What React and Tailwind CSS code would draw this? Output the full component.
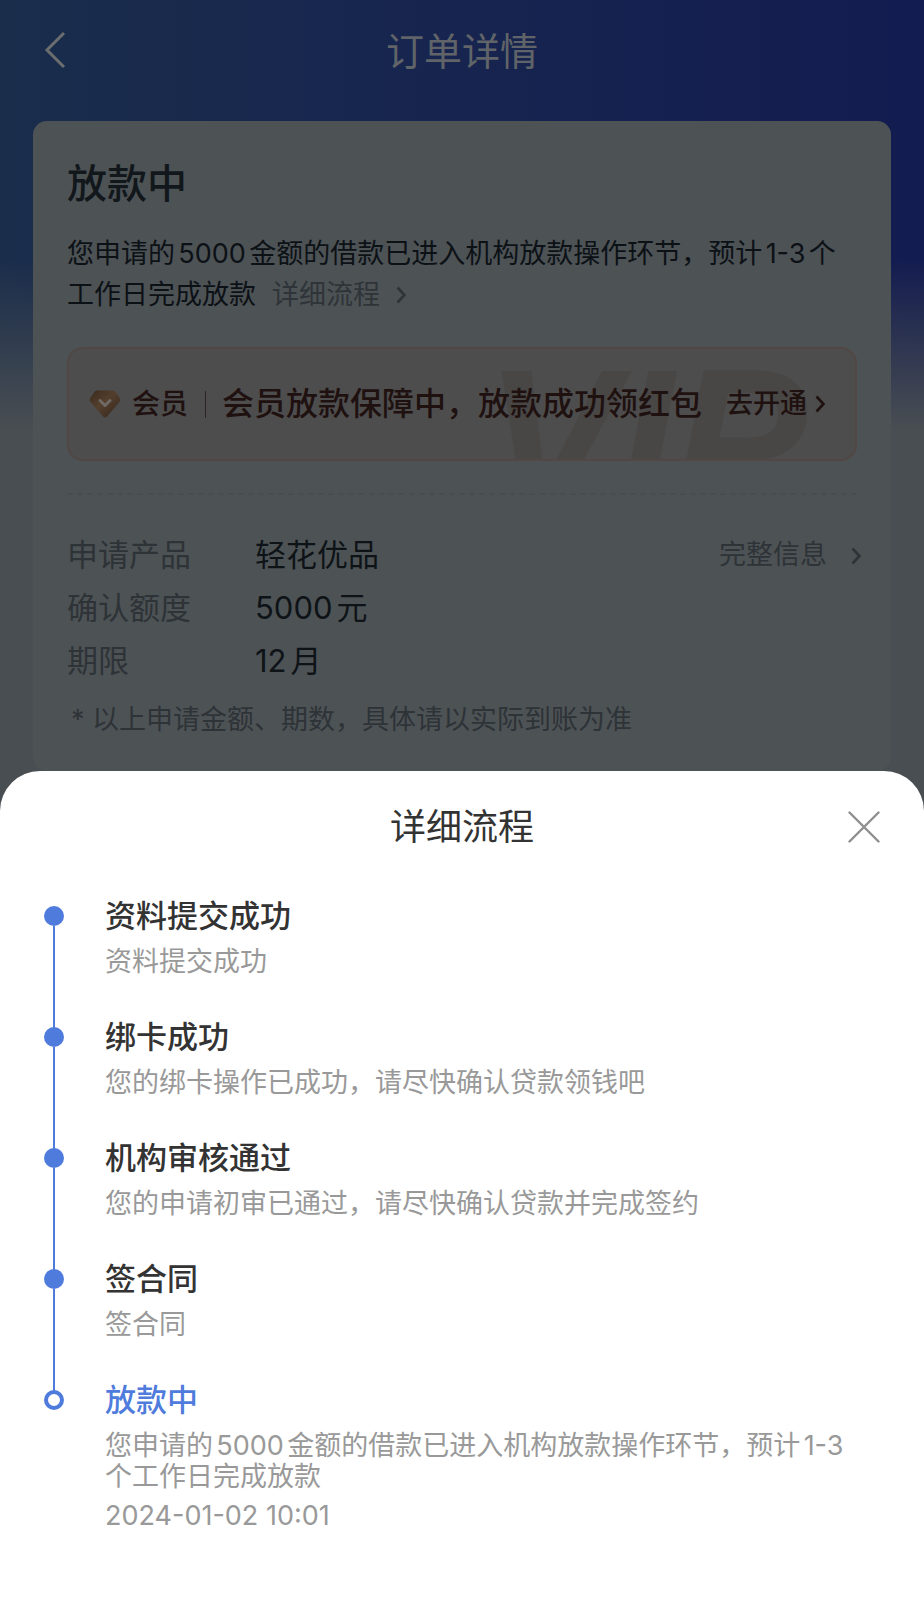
import React from "react";

const steps = [
  { title: "资料提交成功", desc: "资料提交成功" },
  { title: "绑卡成功", desc: "您的绑卡操作已成功，请尽快确认贷款领钱吧" },
  { title: "机构审核通过", desc: "您的申请初审已通过，请尽快确认贷款并完成签约" },
  { title: "签合同", desc: "签合同" },
  {
    title: "放款中",
    desc: "您申请的5000金额的借款已进入机构放款操作环节，预计1-3个工作日完成放款",
    time: "2024-01-02 10:01",
    current: true,
  },
];

const info = [
  { label: "申请产品", value: "轻花优品", more: true },
  { label: "确认额度", value: "5000元" },
  { label: "期限", value: "12月" },
];

const Chevron = () => (
  <svg viewBox="0 0 10 18" className="h-[18px] w-[10px]" fill="none" stroke="currentColor" aria-hidden="true">
    <path d="M1.500 1.500 L8.500 9 L1.500 16.500" strokeWidth="2.600" />
  </svg>
);

const Diamond = () => (
  <svg viewBox="0 0 32 28" className="h-7 w-8 shrink-0" aria-hidden="true">
    <defs>
      <linearGradient id="gem" x1="0" y1="0" x2="1" y2="1">
        <stop offset="0" stopColor="#3a2a1d" />
        <stop offset="0.45" stopColor="#543f2d" />
        <stop offset="1" stopColor="#33241a" />
      </linearGradient>
    </defs>
    <path
      d="M8 0.5 H24 Q25.5 0.5 26.5 1.8 L31 8.5 Q32 10 30.8 11.5 L18 26.5 Q16 28.5 14 26.5 L1.2 11.5 Q0 10 1 8.5 L5.5 1.8 Q6.5 0.5 8 0.5 Z"
      fill="url(#gem)"
    />
    <path d="M11 10.5 L16 15.5 L21 10.5" fill="none" stroke="#6f6965" strokeWidth="3" strokeLinecap="round" strokeLinejoin="round" />
  </svg>
);

const MemberBanner = () => (
  <div className="relative mt-8 flex h-[114px] items-center overflow-hidden rounded-[16px] border-2 border-[#524745] bg-[#4d4d4d] pl-5 pr-[30px] text-[#1f1110]">
    <span
      className="absolute right-12 top-0 font-['Liberation_Sans',sans-serif] text-[200px] font-bold italic leading-[182px] text-[#494746]"
      aria-hidden="true"
    >
      VIP
    </span>
    <div className="relative flex w-full items-center">
      <Diamond />
      <span className="ml-[11px] text-[28px] font-medium leading-10">会员</span>
      <span className="ml-[17px] mr-4 h-[27px] w-px bg-[#2e2322]" />
      <span className="text-[32px] font-medium leading-10">会员放款保障中，放款成功领红包</span>
      <a href="#open" className="ml-auto flex items-center gap-2 text-[27px] font-medium leading-10">
        去开通
        <Chevron />
      </a>
    </div>
  </div>
);

const OrderCard = () => (
  <section className="mx-[33px] rounded-[14px] bg-[#4d5255] px-[34px] pb-[31px] pt-9">
    <h2 className="text-[40px] font-medium leading-[54px] text-[#12171b]">放款中</h2>
    <p className="mt-[22px] text-[27px] leading-[41px] text-[#0c1116]">
      您申请的5000金额的借款已进入机构放款操作环节，预计1-3个工作日完成放款
      <a href="#process" className="ml-4 inline-flex items-center gap-4 text-[#2f3438]">
        详细流程
        <Chevron />
      </a>
    </p>
    <MemberBanner />
    <div className="mt-8 border-t-2 border-dashed border-[#484d51]" />
    <dl className="mt-[34px]">
      {info.map((row) => (
        <div key={row.label} className="flex h-[53px] items-center text-[31px]">
          <dt className="w-[188px] text-[#2e3337]">{row.label}</dt>
          <dd className="text-[#0e1317]">{row.value}</dd>
          {row.more && (
            <dd className="-mr-1 ml-auto">
              <a href="#info" className="flex items-center gap-6 text-[27px] text-[#2e3337]">
                完整信息
                <Chevron />
              </a>
            </dd>
          )}
        </div>
      ))}
    </dl>
    <p className="mt-[11px] pl-1 text-[27px] leading-[41px] text-[#2e3337]">* 以上申请金额、期数，具体请以实际到账为准</p>
  </section>
);

const Step = ({ step, last }) => (
  <li className="flex">
    <div className="flex w-5 shrink-0 flex-col items-center">
      <span className="h-[10px] w-[2px]" />
      {step.current ? (
        <span className="h-5 w-5 shrink-0 rounded-full border-4 border-[#4f7cdc] bg-white" />
      ) : (
        <span className="h-5 w-5 shrink-0 rounded-full bg-[#4f7cdc]" />
      )}
      {/* the line runs on under the gap above the next dot */}
      {!last && <span className="-mb-[11px] w-[2px] flex-1 bg-[#4f7cdc]" />}
    </div>
    <div className={last ? "ml-[41px]" : "ml-[41px] pb-10"}>
      <h3 className={step.current ? "text-[31px] font-medium leading-10 text-[#4f7cdc]" : "text-[31px] font-medium leading-10 text-[#333333]"}>
        {step.title}
      </h3>
      <p className="mt-[10px] text-[27px] leading-[31px] text-[#999999]">{step.desc}</p>
      {step.time && (
        <time dateTime="2024-01-02T10:01" className="mt-2 block text-[27px] leading-[31px] text-[#999999]">
          {step.time}
        </time>
      )}
    </div>
  </li>
);

const ProcessSheet = () => (
  <section role="dialog" aria-labelledby="sheet-title" className="grow rounded-t-[40px] bg-white pb-[70px] pl-11 pr-[60px]">
    <div className="-mr-4 grid grid-cols-[32px_1fr_32px] items-center pt-[30px]">
      <h2 id="sheet-title" className="col-start-2 text-center text-[36px] leading-[52px] text-[#333333]">
        详细流程
      </h2>
      <button type="button" aria-label="关闭" className="h-8 w-8 text-[#8f8f8f]">
        <svg viewBox="0 0 32 32" className="h-8 w-8" fill="none" stroke="currentColor" strokeWidth="2.4" strokeLinecap="round">
          <path d="M1.5 1.5 L30.5 30.5 M30.5 1.5 L1.5 30.5" />
        </svg>
      </button>
    </div>
    <ol className="mt-[43px]">
      {steps.map((step, i) => (
        <Step key={step.title} step={step} last={i === steps.length - 1} />
      ))}
    </ol>
  </section>
);

const App = () => (
  <div className="flex min-h-screen flex-col bg-[#494e52] font-['Inter','Noto_Sans_CJK_SC',sans-serif] [text-autospace:normal]">
    <div className="bg-[linear-gradient(to_bottom,transparent_260px,#494e52_430px),linear-gradient(to_right,#1a2d4b,#17264f_40%,#131c50)]">
      <header className="grid h-[121px] grid-cols-[40px_1fr_40px] items-start px-[35px] pt-[25px]">
        <button type="button" aria-label="返回" className="flex h-[50px] items-center pl-[9px] text-[#6a6e6e]">
          <svg viewBox="0 0 22 38" className="h-[38px] w-[22px]" fill="none" stroke="currentColor" strokeWidth="3">
            <path d="M20 2 L3 19 L20 36" />
          </svg>
        </button>
        <h1 className="text-center text-[38px] leading-[52px] text-[#606468]">订单详情</h1>
      </header>
      <OrderCard />
    </div>
    <ProcessSheet />
  </div>
);

export default App;
